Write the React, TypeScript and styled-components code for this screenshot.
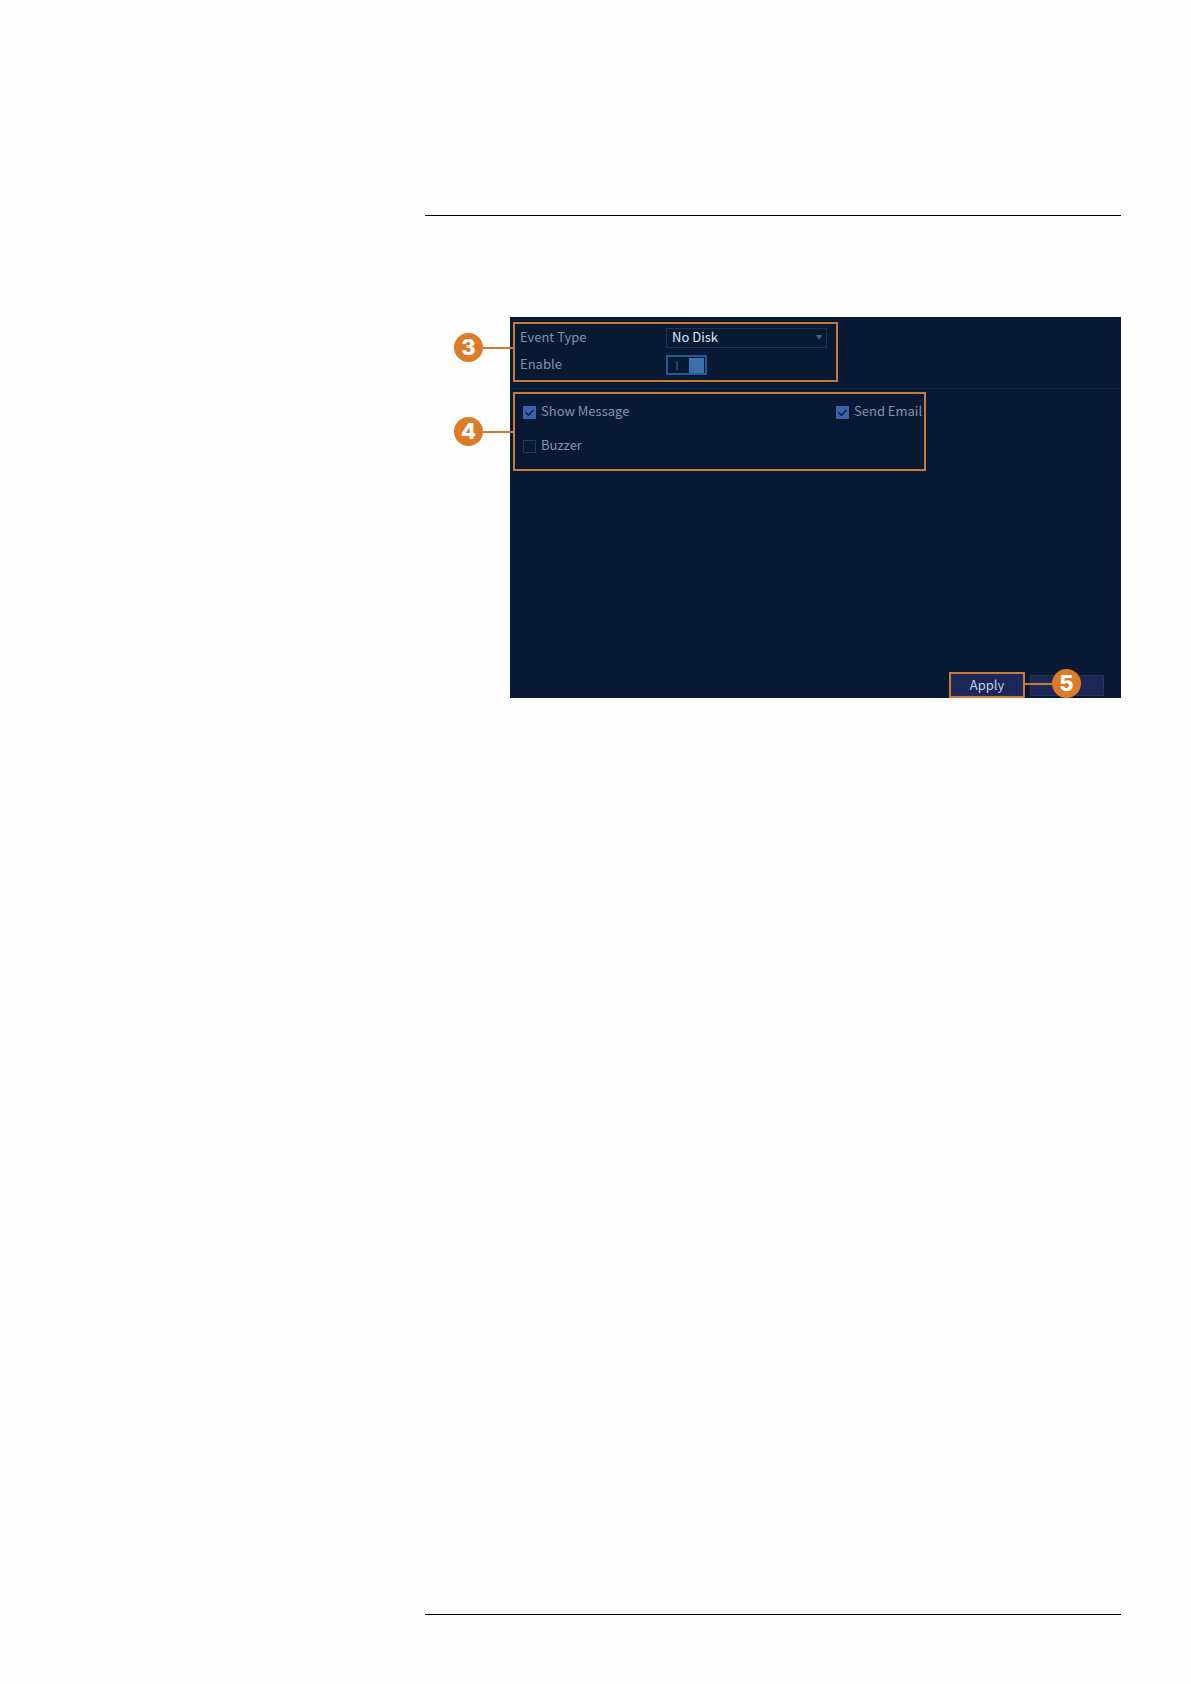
import React from "react";
import styled, { createGlobalStyle } from "styled-components";

const orange = "#de7b29";
const frameOrange = "#c97a37";
const navy = "#081a33";
const uiFont = `"Noto Sans CJK SC", "Noto Sans", sans-serif`;

const GlobalStyle = createGlobalStyle`
  *, *::before, *::after { box-sizing: border-box; }
  body { margin: 0; background: #fefefe; font-family: ${uiFont}; }
`;

const Page = styled.main`
  min-height: 100vh;
  display: flex;
  flex-direction: column;
  padding: 215px 70px 69px 425px;
`;

const Rule = styled.hr<{ $bottom?: boolean }>`
  width: 100%;
  height: 1px;
  margin: ${(p) => (p.$bottom ? "auto 0 0" : "0")};
  border: 0;
  background: #000;
`;

const Figure = styled.figure`
  margin: 101px 0 40px;
  padding-left: 85px;
`;

const Panel = styled.form`
  display: flex;
  flex-direction: column;
  min-height: 381px;
  background: ${navy};
  color: #8292a8;
  font-size: 13px;
  line-height: 18px;
`;

const EventSection = styled.section`
  padding: 5px 3px 6px;
  border-bottom: 1px solid #10243a;
`;

const ActionSection = styled.section`
  padding: 3px;
`;

const Frame = styled.div<{ $width: number }>`
  position: relative;
  width: ${(p) => p.$width}px;
  max-width: 100%;
  border: 2px solid ${frameOrange};
`;

const Fields = styled(Frame)`
  display: grid;
  grid-template-columns: 146px 161px;
  row-gap: 7px;
  padding: 4px 5px 5px;
`;

const Choices = styled(Frame)`
  display: grid;
  grid-template-columns: 313px auto;
  row-gap: 14px;
  padding: 8px 0 13px 8px;
`;

const FieldLabel = styled.label`
  height: 20px;
`;

const SelectBox = styled.div`
  position: relative;
  height: 20px;
`;

const Select = styled.select`
  display: block;
  width: 100%;
  height: 20px;
  padding: 0 20px 2px 5px;
  border: 1px solid #1a3450;
  border-radius: 0;
  appearance: none;
  background: transparent;
  color: #dbe6f2;
  font: 13px/16px ${uiFont};
`;

const Arrow = styled.svg`
  position: absolute;
  top: 7px;
  right: 5px;
  width: 6px;
  height: 6px;
  fill: #4a607d;
  pointer-events: none;
`;

const Switch = styled.input`
  display: flex;
  align-items: center;
  justify-content: space-between;
  width: 41px;
  height: 20px;
  margin: 0;
  padding: 0 1px 0 8px;
  border: 2px solid #2a5790;
  appearance: none;

  &::before {
    content: "";
    width: 2px;
    height: 9px;
    background: #244468;
  }

  &::after {
    content: "";
    width: 15px;
    height: 15px;
    background: #3972b0;
  }

  &:not(:checked) {
    flex-direction: row-reverse;
    padding: 0 8px 0 1px;
  }
`;

const Choice = styled.label`
  display: flex;
  align-items: flex-start;
  gap: 5px;
  height: 20px;
`;

const TickBox = styled.span`
  display: grid;
  width: 13px;
  height: 13px;
  margin-top: 4px;

  input, svg { grid-area: 1 / 1; }
  svg { visibility: hidden; pointer-events: none; }
  input:checked + svg { visibility: visible; }
`;

const Tick = styled.input`
  width: 13px;
  height: 13px;
  margin: 0;
  border: 1px solid #203b57;
  appearance: none;

  &:checked {
    border-color: #3a62a8;
    background: #3c62ae;
  }
`;

const Actions = styled.footer`
  display: flex;
  align-items: flex-start;
  justify-content: flex-end;
  gap: 5px;
  margin-top: auto;
  padding-right: 17px;
`;

const Button = styled.button`
  display: block;
  width: 100%;
  height: 22px;
  padding: 0 0 1px;
  border: 1px solid #1d2c60;
  background: #1c2657;
  color: #c3cfe8;
  font: 13px/18px ${uiFont};
`;

const SecondaryButton = styled(Button)`
  width: 74px;
  height: 21px;
  margin-top: 3px;
  border-color: #1a3a58;
`;

const Callout = styled.span<{ $top: number; $after?: boolean }>`
  position: absolute;
  top: ${(p) => p.$top}px;
  ${(p) => (p.$after ? "left: 100%;" : "right: 100%;")}
  z-index: 1;
  display: flex;
  flex-direction: ${(p) => (p.$after ? "row-reverse" : "row")};
  align-items: center;

  &::after {
    content: "";
    width: ${(p) => (p.$after ? 29 : 32)}px;
    height: 2px;
    background: ${frameOrange};
  }
`;

const Badge = styled.span`
  width: 29px;
  height: 29px;
  border-radius: 50%;
  background: ${orange};
  color: #fff;
  font: 800 22px/29px Inter, sans-serif;
  text-align: center;
`;

function CheckItem({ label, checked }: { label: string; checked?: boolean }) {
  return (
    <Choice>
      <TickBox>
        <Tick type="checkbox" defaultChecked={checked} />
        <svg width="13" height="13" viewBox="0 0 13 13" aria-hidden="true">
          <path d="M2.5 6.5 5.5 9.2 10.5 4" fill="none" stroke="#0a1b45" strokeWidth="1.5" />
        </svg>
      </TickBox>
      {label}
    </Choice>
  );
}

export default function App() {
  return (
    <>
      <GlobalStyle />
      <Page>
        <Rule />
        <Figure>
          <Panel onSubmit={(e) => e.preventDefault()}>
            <EventSection>
              <Fields $width={325}>
                <FieldLabel htmlFor="event-type">Event Type</FieldLabel>
                <SelectBox>
                  <Select id="event-type" defaultValue="No Disk">
                    <option>No Disk</option>
                  </Select>
                  <Arrow viewBox="0 0 6 6" aria-hidden="true">
                    <path d="M0 0H6L3 5Z" />
                  </Arrow>
                </SelectBox>
                <FieldLabel htmlFor="enable">Enable</FieldLabel>
                <Switch id="enable" type="checkbox" role="switch" defaultChecked />
                <Callout $top={9}>
                  <Badge>3</Badge>
                </Callout>
              </Fields>
            </EventSection>
            <ActionSection>
              <Choices $width={413}>
                <CheckItem label="Show Message" checked />
                <CheckItem label="Send Email" checked />
                <CheckItem label="Buzzer" />
                <Callout $top={23}>
                  <Badge>4</Badge>
                </Callout>
              </Choices>
            </ActionSection>
            <Actions>
              <Frame $width={76}>
                <Button type="submit">Apply</Button>
                <Callout $top={-5} $after>
                  <Badge>5</Badge>
                </Callout>
              </Frame>
              <SecondaryButton type="button" aria-label="Back" />
            </Actions>
          </Panel>
        </Figure>
        <Rule $bottom />
      </Page>
    </>
  );
}
